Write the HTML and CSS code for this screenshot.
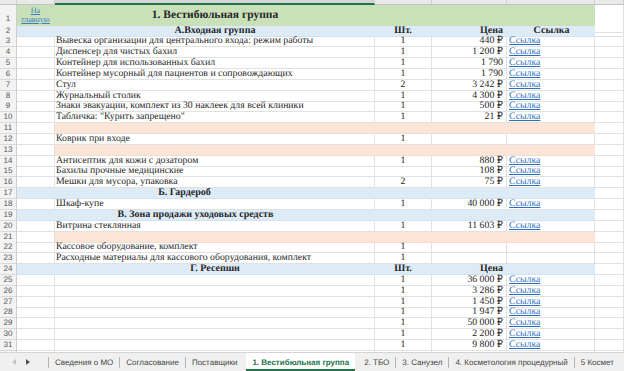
FILE: index.html
```html
<!DOCTYPE html>
<html lang="ru">
<head>
    <meta charset="UTF-8">
    <meta name="viewport" content="width=device-width, initial-scale=1.0">
    <title>1. Вестибюльная группа</title>
    <link rel="stylesheet" href="styles.css">
</head>
<body>
    <div class="window">
        <div class="colhead">
            <div class="ch"></div>
            <div class="ch"></div>
            <div class="ch active"></div>
            <div class="ch"></div>
            <div class="ch"></div>
            <div class="ch"></div>
            <div class="ch"></div>
        </div>

        <div class="sheet" id="sheet">
            <div class="row row-title">
                <div class="rn">1</div>
                <div class="ca"><a href="#" class="home"><span>На</span><span>главную</span></a></div>
                <div class="cb title">1. Вестибюльная группа</div>
                <div class="cc"></div>
                <div class="cd"></div>
                <div class="ce"></div>
                <div class="cf"></div>
            </div>
        </div>

        <div class="tabs">
            <div class="nav">
                <svg width="5" height="6" viewBox="0 0 5 6" class="arrow off"><path d="M4 0 L0 3 L4 6 Z"/></svg>
                <svg width="5" height="6" viewBox="0 0 5 6" class="arrow"><path d="M1 0 L5 3 L1 6 Z"/></svg>
            </div>
            <span class="sep"></span>
            <div class="tab">Сведения о МО</div>
            <span class="sep"></span>
            <div class="tab">Согласование</div>
            <span class="sep"></span>
            <div class="tab">Поставщики</div>
            <div class="tab current">1. Вестибюльная группа</div>
            <div class="tab">2. ТБО</div>
            <span class="sep"></span>
            <div class="tab">3. Санузел</div>
            <span class="sep"></span>
            <div class="tab">4. Косметология процедурный</div>
            <span class="sep"></span>
            <div class="tab">5 Космет</div>
        </div>
    </div>

    <script>
        // g = group title over A:B, h = header row, p = empty peach row
        var rows = [
            ["h", "А.Входная группа", "Шт.", "Цена", "Ссылка"],
            ["", "Вывеска организации для центрального входа: режим работы", "1", "440 ₽", "Ссылка"],
            ["", "Диспенсер для чистых бахил", "1", "1 200 ₽", "Ссылка"],
            ["", "Контейнер для использованных бахил", "1", "1 790", "Ссылка"],
            ["", "Контейнер мусорный для пациентов и сопровождающих", "1", "1 790", "Ссылка"],
            ["", "Стул", "2", "3 242 ₽", "Ссылка"],
            ["", "Журнальный столик", "1", "4 300 ₽", "Ссылка"],
            ["", "Знаки эвакуации, комплект из 30 наклеек для всей клиники", "1", "500 ₽", "Ссылка"],
            ["", "Табличка: \"Курить запрещено\"", "1", "21 ₽", "Ссылка"],
            ["p"],
            ["", "Коврик при входе", "1", "", ""],
            ["p"],
            ["", "Антисептик для кожи с дозатором", "1", "880 ₽", "Ссылка"],
            ["", "Бахилы прочные медицинские", "", "108 ₽", "Ссылка"],
            ["", "Мешки для мусора, упаковка", "2", "75 ₽", "Ссылка"],
            ["g", "Б. Гардероб", "shift"],
            ["", "Шкаф-купе", "1", "40 000 ₽", "Ссылка"],
            ["g", "В. Зона продажи уходовых средств"],
            ["", "Витрина стеклянная", "1", "11 603 ₽", "Ссылка"],
            ["p"],
            ["", "Кассовое оборудование, комплект", "1", "", ""],
            ["", "Расходные материалы для кассового оборудования, комплект", "1", "", ""],
            ["h", "Г. Ресепшн", "Шт.", "Цена", ""],
            ["", "", "1", "36 000 ₽", "Ссылка"],
            ["", "", "1", "3 286 ₽", "Ссылка"],
            ["", "", "1", "1 450 ₽", "Ссылка"],
            ["", "", "1", "1 947 ₽", "Ссылка"],
            ["", "", "1", "50 000 ₽", "Ссылка"],
            ["", "", "1", "2 200 ₽", "Ссылка"],
            ["", "", "1", "9 800 ₽", "Ссылка"]
        ];

        var sheet = document.getElementById("sheet");

        rows.forEach(function(r, i){
            var type = r[0];
            var row = document.createElement("div");
            row.className = "row" + (type ? " row-" + type : "");

            var html = '<div class="rn">' + (i + 2) + '</div>';
            if (type == "g") {
                html += '<div class="cab ' + (r[2] || "") + '">' + r[1] + '</div>';
                html += '<div class="cc"></div><div class="cd"></div><div class="ce"></div>';
            } else {
                var link = r[4] || "";
                if (link && type != "h") {
                    link = '<a href="#">' + link + '</a>';
                }
                html += '<div class="ca"></div>';
                html += '<div class="cb">' + (r[1] || "") + '</div>';
                html += '<div class="cc">' + (r[2] || "") + '</div>';
                html += '<div class="cd">' + (r[3] || "") + '</div>';
                html += '<div class="ce">' + link + '</div>';
            }
            html += '<div class="cf"></div>';

            row.innerHTML = html;
            sheet.appendChild(row);
        });

        // row 32 is scrolled under the tab bar
        var last = document.createElement("div");
        last.className = "row";
        last.innerHTML = '<div class="rn"></div><div></div><div></div><div></div><div></div><div></div><div></div>';
        sheet.appendChild(last);
    </script>
</body>
</html>
```

FILE: styles.css
```css
*{
    margin: 0;
    padding: 0;
    box-sizing: border-box;
}
body{
    width: 624px;
    height: 371px;
    overflow: hidden;
    background: #fff;
    font-family: "Liberation Serif", "DejaVu Serif", serif;
    color: #262626;
    text-rendering: geometricPrecision;
}
.window{
    display: flex;
    flex-direction: column;
    height: 100%;
}

/* column letters strip (mostly scrolled off) */
.colhead,
.row{
    display: grid;
    grid-template-columns: 17px 38px 320px 57px 75px 88px 1fr;
}
.colhead{
    height: 5px;
    flex: none;
}
.ch{
    background: #e9e9e9;
    border-right: 1px solid #cfcfcf;
    border-bottom: 1px solid #c4c4c4;
}
.ch.active{
    background: #d6d6d6;
    border-bottom: 2px solid #217346;
}

/* grid */
.sheet{
    flex: 1;
    overflow: hidden;
}
.row{
    height: 10.85px;
}
.row > div{
    border-right: 1px solid #e1e1e1;
    border-bottom: 1px solid #e1e1e1;
    font-size: 9.8px;
    line-height: 10px;
    white-space: nowrap;
    overflow: visible;
}
.row .rn{
    background: #f3f3f3;
    border-right-color: #cfcfcf;
    border-bottom-color: #dadada;
    font-family: "Liberation Sans", Arial, sans-serif;
    font-size: 8px;
    color: #555;
    text-align: center;
}
.row .cb{
    padding-left: 1px;
}
.row .cc{
    text-align: center;
}
.row .cd{
    text-align: right;
    padding-right: 3px;
}
.row .ce{
    padding-left: 2px;
}
.row .cab{
    grid-column: span 2;
    text-align: center;
    font-weight: bold;
    font-size: 10px;
}
.row .cab.shift{
    padding-right: 22px;
}
a{
    color: #2e6fc0;
    text-decoration: underline;
}

/* row 1 */
.row.row-title{
    height: 20.5px;
}
.row-title > .ca,
.row-title > .cb,
.row-title > .cc,
.row-title > .cd,
.row-title > .ce{
    background: #c9e1b9;
    border-right-color: #c9e1b9;
}
.row-title .rn{
    line-height: 27px;
}
.home{
    display: flex;
    flex-direction: column;
    align-items: center;
    width: 100%;
    font-size: 8px;
    line-height: 9px;
    padding-top: 1px;
    color: #3b7cc4;
}
.row .title{
    font-size: 11.5px;
    font-weight: bold;
    text-align: center;
    line-height: 20px;
}

/* coloured rows */
.row-h > .ca,
.row-h > .cb,
.row-h > .cc,
.row-h > .cd,
.row-h > .ce,
.row-g > .cab,
.row-g > .cc,
.row-g > .cd,
.row-g > .ce{
    background: #ddebf7;
    border-right-color: #ddebf7;
    border-bottom-color: #d3e2f0;
}
.row-h > div{
    font-weight: bold;
    text-align: center;
}
.row.row-h > div:not(.rn){
    font-size: 10px;
}
.row-h .rn{
    font-weight: normal;
}
.row-p > .cb,
.row-p > .cc,
.row-p > .cd,
.row-p > .ce{
    background: #fce4d6;
    border-right-color: #fce4d6;
    border-bottom-color: #f6dccd;
}

/* sheet tabs */
.tabs{
    height: 19px;
    flex: none;
    display: flex;
    align-items: center;
    background: #f0f0f0;
    border-top: 1px solid #d4d4d4;
    font-family: "Liberation Sans", Arial, sans-serif;
    font-size: 8px;
    color: #444;
    white-space: nowrap;
    overflow: hidden;
}
.nav{
    width: 48px;
    flex: none;
    display: flex;
    align-items: center;
    gap: 8px;
    padding-left: 12px;
}
.arrow{
    fill: #555;
}
.arrow.off{
    fill: #c4c4c4;
}
.sep{
    flex: none;
    width: 1px;
    height: 11px;
    background: #b4b4b4;
}
.tab{
    flex: none;
    padding: 0 6px;
    height: 100%;
    display: flex;
    align-items: center;
}
.tab.current{
    background: #fff;
    color: #217346;
    font-weight: bold;
    border-bottom: 2px solid #217346;
    padding-top: 2px;
    margin: 0 3px;
}
```
